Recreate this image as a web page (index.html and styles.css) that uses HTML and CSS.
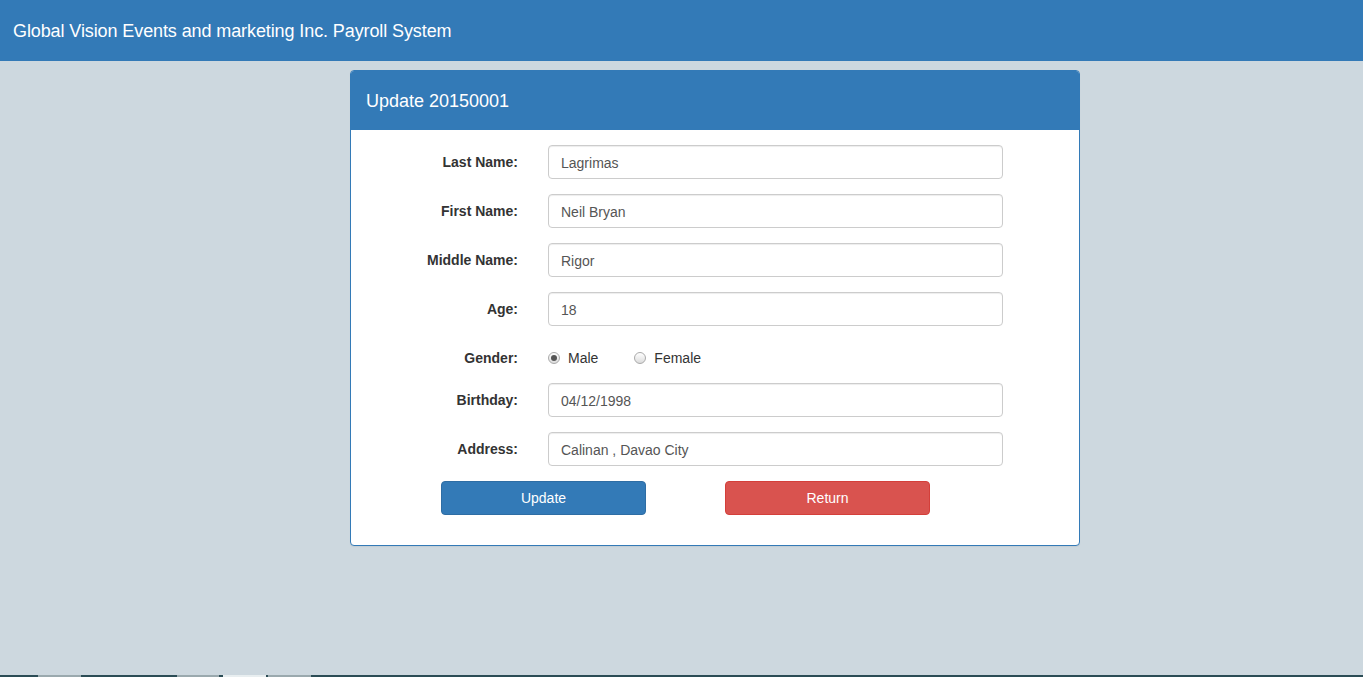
FILE: index.html
```html
<!DOCTYPE html>
<html>
<head>
<meta charset="utf-8">
<title>Payroll System</title>
<link rel="stylesheet" href="styles.css">
</head>
<body>
<div class="page">
  <nav class="navbar">
    <span class="brand">Global Vision Events and marketing Inc. Payroll System</span>
  </nav>
  <main class="content">
    <section class="panel">
      <header class="panel-heading">
        <h3 class="panel-title">Update 20150001</h3>
      </header>
      <form class="panel-body">
        <div class="form-group">
          <label class="control-label">Last Name:</label>
          <input class="form-control" type="text" value="Lagrimas">
        </div>
        <div class="form-group">
          <label class="control-label">First Name:</label>
          <input class="form-control" type="text" value="Neil Bryan">
        </div>
        <div class="form-group">
          <label class="control-label">Middle Name:</label>
          <input class="form-control" type="text" value="Rigor">
        </div>
        <div class="form-group">
          <label class="control-label">Age:</label>
          <input class="form-control" type="text" value="18">
        </div>
        <div class="form-group radio-group">
          <label class="control-label">Gender:</label>
          <div class="radios">
            <label class="radio-inline"><span class="radio checked"></span>Male</label>
            <label class="radio-inline"><span class="radio"></span>Female</label>
          </div>
        </div>
        <div class="form-group">
          <label class="control-label">Birthday:</label>
          <input class="form-control" type="text" value="04/12/1998">
        </div>
        <div class="form-group">
          <label class="control-label">Address:</label>
          <input class="form-control" type="text" value="Calinan , Davao City">
        </div>
        <div class="actions">
          <button type="button" class="btn btn-primary">Update</button>
          <button type="button" class="btn btn-danger">Return</button>
        </div>
      </form>
    </section>
  </main>
  <div class="taskbar">
    <span class="tb tb1"></span>
    <span class="tb tb2"></span>
    <span class="tb tb3"></span>
    <span class="tb tb4"></span>
  </div>
</div>
</body>
</html>
```
FILE: styles.css
```css
* { box-sizing: border-box; }
html, body { margin: 0; padding: 0; }
body {
  font-family: "Liberation Sans", Arial, Helvetica, sans-serif;
  font-size: 14px;
  line-height: 1.42857;
  color: #333;
  background: #cdd8df;
}
.page {
  min-height: 100vh;
  display: flex;
  flex-direction: column;
}
.navbar {
  height: 61px;
  background: #337ab7;
  display: flex;
  align-items: center;
  padding: 0 13px;
}
.brand {
  color: #fff;
  font-size: 18px;
  line-height: 20px;
  letter-spacing: -0.1px;
}
.content {
  display: flex;
  justify-content: flex-start;
  padding-top: 9px;
  padding-left: 350px;
}
.panel {
  width: 730px;
  background: #fff;
  border: 1px solid #337ab7;
  border-radius: 4px;
  box-shadow: 0 1px 1px rgba(0,0,0,0.05);
}
.panel-heading {
  background: #337ab7;
  height: 59px;
  padding: 0 15px;
  display: flex;
  align-items: center;
  border-top-left-radius: 3px;
  border-top-right-radius: 3px;
}
.panel-title {
  margin: 0;
  color: #fff;
  font-size: 18px;
  font-weight: normal;
  line-height: 20px;
}
.panel-body {
  padding: 15px;
  margin: 0;
  display: flex;
  flex-direction: column;
}
.form-group {
  display: flex;
  align-items: center;
  margin-bottom: 15px;
}
.control-label {
  width: 152px;
  text-align: right;
  font-weight: bold;
  padding-top: 2px;
  margin-right: 30px;
  flex: none;
}
.form-control {
  width: 455px;
  height: 34px;
  padding: 7px 12px 5px;
  font-family: inherit;
  font-size: 14px;
  color: #555;
  background: #fff;
  border: 1px solid #ccc;
  border-radius: 4px;
  box-shadow: inset 0 1px 1px rgba(0,0,0,0.075);
  margin: 0;
}
.radio-group {
  height: 27px;
  align-items: flex-start;
  padding-top: 7px;
}
.radio-group .control-label { line-height: 20px; padding-top: 0; }
.radios {
  display: flex;
  line-height: 20px;
}
.radio-inline {
  display: flex;
  align-items: center;
  color: #333;
}
.radio-inline + .radio-inline { margin-left: 36px; }
.radio {
  width: 12px;
  height: 12px;
  border-radius: 50%;
  border: 1px solid #aaa;
  background: linear-gradient(#fff, #dcdcdc);
  margin-right: 8px;
  position: relative;
}
.radio.checked::after {
  content: "";
  position: absolute;
  left: 2px;
  top: 2px;
  width: 6px;
  height: 6px;
  border-radius: 50%;
  background: #555;
}
.actions {
  display: flex;
  padding-left: 75px;
  gap: 79px;
  margin-bottom: 15px;
}
.btn {
  width: 205px;
  height: 34px;
  font-family: inherit;
  font-size: 14px;
  color: #fff;
  border-radius: 4px;
  border: 1px solid;
  padding: 6px 12px;
  line-height: 20px;
  cursor: pointer;
}
.btn-primary { background: #337ab7; border-color: #2e6da4; }
.btn-danger { background: #d9534f; border-color: #d43f3a; }
.taskbar {
  margin-top: auto;
  height: 2px;
  background: #2b4c55;
  position: relative;
}
.tb {
  position: absolute;
  top: 0;
  height: 2px;
  background: #9aa9ae;
}
.tb1 { left: 38px; width: 43px; }
.tb2 { left: 177px; width: 42px; }
.tb3 { left: 223px; width: 43px; background: #e8eef0; }
.tb4 { left: 268px; width: 43px; }
```
